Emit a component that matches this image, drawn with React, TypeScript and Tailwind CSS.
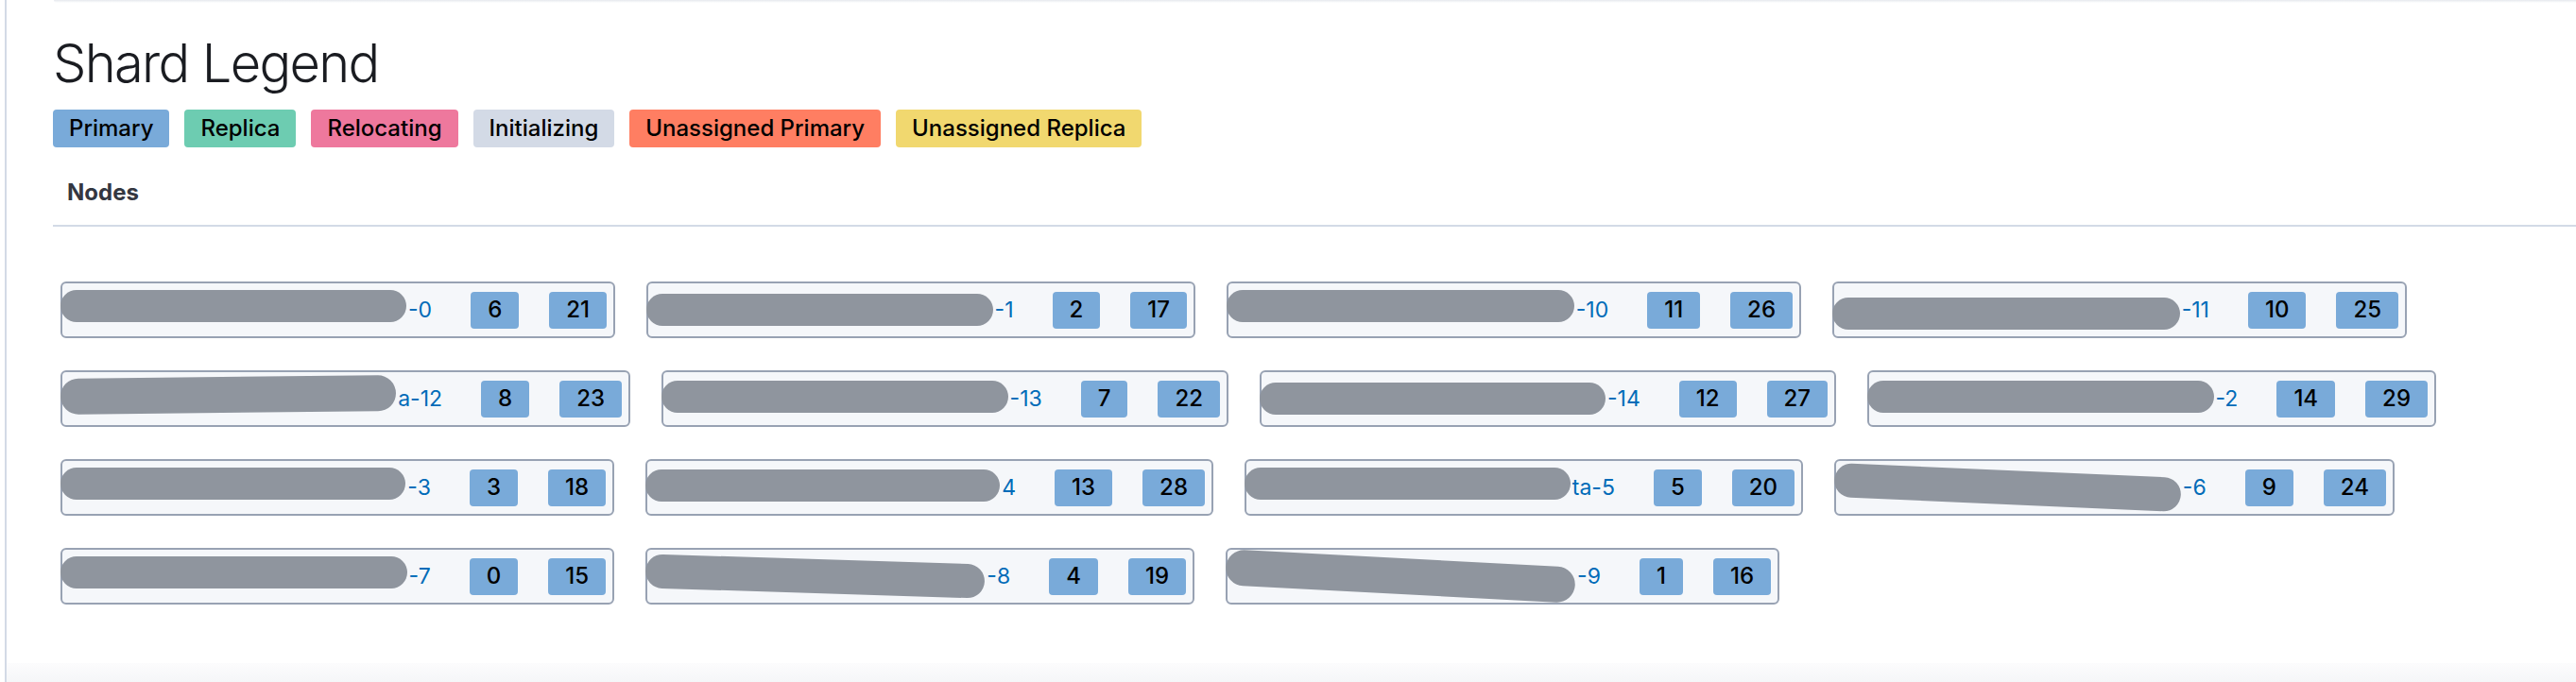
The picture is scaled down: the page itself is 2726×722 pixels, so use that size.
type ShardNode = {
    suffix: string;
    primary: number;
    replica: number;
    width: string;
    bar: string;
};

const legend = [
    { label: "Primary", color: "bg-[#79aad9]" },
    { label: "Replica", color: "bg-[#6dccb1]" },
    { label: "Relocating", color: "bg-[#ee789d]" },
    { label: "Initializing", color: "bg-[#d3dae6]" },
    { label: "Unassigned Primary", color: "bg-[#ff7e62]" },
    { label: "Unassigned Replica", color: "bg-[#f1d86f]" },
];

// node names are scribbled out in the screenshot, only the tail is readable
const nodes: ShardNode[] = [
    { suffix: "-0", primary: 6, replica: 21, width: "w-[587px]", bar: "-translate-y-1" },
    { suffix: "-1", primary: 2, replica: 17, width: "w-[581px]", bar: "translate-y-0" },
    { suffix: "-10", primary: 11, replica: 26, width: "w-[608px]", bar: "-translate-y-1" },
    { suffix: "-11", primary: 10, replica: 25, width: "w-[608px]", bar: "translate-y-1" },
    { suffix: "a-12", primary: 8, replica: 23, width: "w-[603px]", bar: "-translate-y-1 -rotate-[0.6deg] h-[38px]" },
    { suffix: "-13", primary: 7, replica: 22, width: "w-[600px]", bar: "-translate-y-0.5" },
    { suffix: "-14", primary: 12, replica: 27, width: "w-[610px]", bar: "translate-y-0" },
    { suffix: "-2", primary: 14, replica: 29, width: "w-[602px]", bar: "-translate-y-0.5" },
    { suffix: "-3", primary: 3, replica: 18, width: "w-[586px]", bar: "-translate-y-1" },
    { suffix: "4", primary: 13, replica: 28, width: "w-[601px]", bar: "-translate-y-0.5" },
    { suffix: "ta-5", primary: 5, replica: 20, width: "w-[591px]", bar: "-translate-y-1" },
    { suffix: "-6", primary: 9, replica: 24, width: "w-[593px]", bar: "rotate-[2.5deg] h-[36px]" },
    { suffix: "-7", primary: 0, replica: 15, width: "w-[586px]", bar: "-translate-y-1" },
    { suffix: "-8", primary: 4, replica: 19, width: "w-[581px]", bar: "rotate-[1.8deg] h-[36px]" },
    { suffix: "-9", primary: 1, replica: 16, width: "w-[586px]", bar: "rotate-[3deg] h-[38px]" },
];

const ShardBadge = ({ value }: { value: number }) => (
    <div className="flex h-[39px] items-center rounded-[4px] bg-[#79aad9] px-[18px] text-[24px] font-medium text-black">
        {value}
    </div>
);

const NodeCard = ({ node }: { node: ShardNode }) => (
    <div
        className={`flex h-[60px] items-center rounded-[6px] border-2 border-[#98a2b3] bg-[#f5f7fa] pr-[7px] ${node.width}`}
    >
        <div className="flex min-w-0 flex-1 items-center">
            <span className={`-ml-[2px] block h-[34px] flex-1 rounded-full bg-[#8f959e] ${node.bar}`} />
            <a className="ml-[2px] text-[23px] text-[#006bb8]">{node.suffix}</a>
        </div>
        <div className="ml-[41px] flex gap-8">
            <ShardBadge value={node.primary} />
            <ShardBadge value={node.replica} />
        </div>
    </div>
);

const App = () => {
    return (
        <div className="flex h-[722px] w-full overflow-hidden bg-white [font-family:Inter,sans-serif]">
            <div className="w-[5px]" />
            <div className="w-[2px] bg-[#d3dae6]" />
            <div className="flex min-w-0 flex-1 flex-col">
                <div className="ml-[50px] h-[3px] rounded-bl-full bg-linear-to-b from-[#e6e9ee] to-white" />

                <div className="pl-[49px]">
                    <h1 className="mt-[36px] text-[56px] font-light leading-[56px] tracking-[-0.03em] text-[#1a1c21]">
                        Shard Legend
                    </h1>

                    <div className="mt-[21px] flex gap-4">
                        {legend.map((item) => (
                            <div
                                key={item.label}
                                className={`h-10 rounded-[4px] px-[17px] text-[24px] font-medium leading-[40px] text-black ${item.color}`}
                            >
                                {item.label}
                            </div>
                        ))}
                    </div>

                    <div className="flex h-[82px] items-end pb-[22px] pl-[15px] text-[24px] font-bold leading-[24px] text-[#343741]">
                        Nodes
                    </div>
                    <div className="h-[2px] bg-[#d3dae6]" />

                    <div className="flex flex-wrap gap-x-[33px] gap-y-[34px] pl-2 pt-[58px]">
                        {nodes.map((node) => (
                            <NodeCard key={node.suffix} node={node} />
                        ))}
                    </div>
                </div>

                <div className="mt-auto h-[20px] bg-linear-to-b from-[#fcfcfd] to-[#f5f6f8]" />
            </div>
        </div>
    );
};

export default App;
